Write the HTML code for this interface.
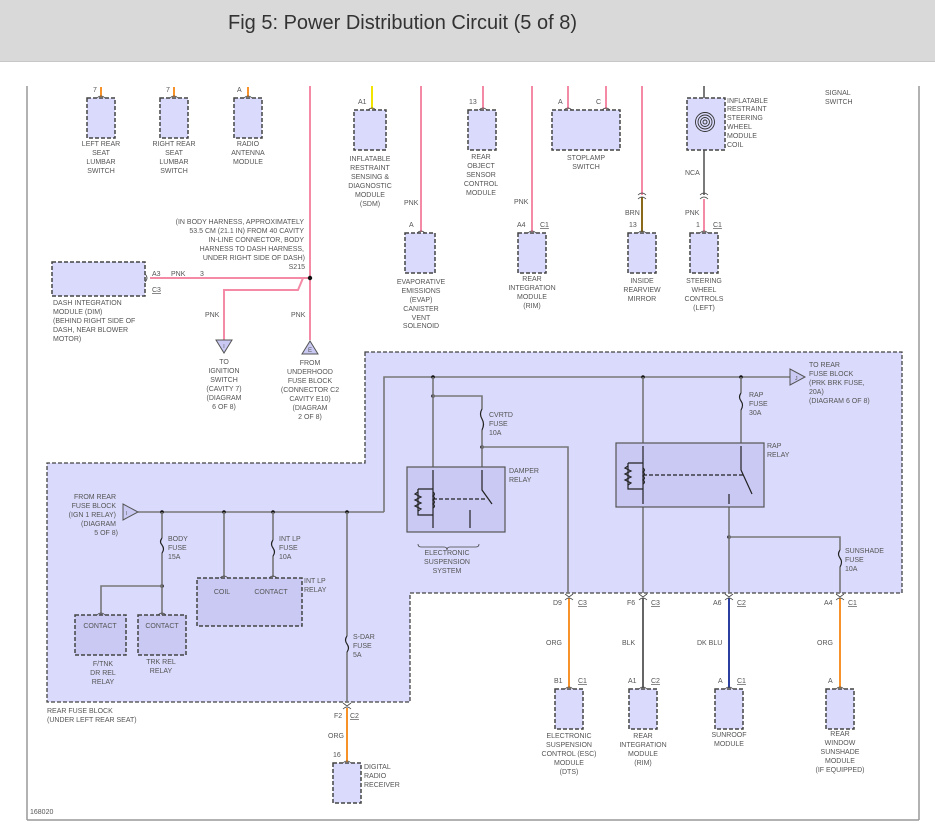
<!DOCTYPE html>
<html><head><meta charset="utf-8"><style>
html,body{margin:0;padding:0;background:#fff;width:935px;height:834px;overflow:hidden}
.hdr{position:absolute;left:0;top:0;width:935px;height:61px;background:#d9d9d9;border-bottom:1px solid #c8c8c8}
.hdr div{position:absolute;left:228px;top:12px;font:20px "Liberation Sans",sans-serif;color:#333}
svg{position:absolute;left:0;top:0}
text{font-family:"Liberation Sans",sans-serif;font-size:7px;fill:#555}
.c{text-anchor:middle}
.r{text-anchor:end}
.box{fill:#dadafc;stroke:#444;stroke-width:1.5;stroke-dasharray:4 2}
.rel{fill:#c9c9f4;stroke:#555;stroke-width:1.2}
.g{stroke:#777;stroke-width:1.6;fill:none}
.p{stroke:#f48aa6;stroke-width:2;fill:none}
.o{stroke:#f7922b;stroke-width:2;fill:none}
.k{stroke:#222;stroke-width:1.2;fill:none}
.cn{stroke:#444;stroke-width:0.8;fill:none}
</style></head><body>
<div class="hdr"><div>Fig 5: Power Distribution Circuit (5 of 8)</div></div>
<svg width="935" height="834" viewBox="0 0 935 834">
<line x1="27" y1="86" x2="27" y2="820" stroke="#999" stroke-width="1.5"/>
<line x1="919" y1="86" x2="919" y2="820" stroke="#999" stroke-width="1.5"/>
<line x1="27" y1="820" x2="919" y2="820" stroke="#999" stroke-width="1.5"/>
<text x="30" y="814">168020</text>

<!-- shaded rear fuse block -->
<path d="M365 352 H902 V593 H410 V702 H47 V463 H365 Z" fill="#dadafc" stroke="#444" stroke-width="1.3" stroke-dasharray="4 2"/>

<!-- top components -->
<g>
<line x1="101" y1="87" x2="101" y2="97" class="o"/><rect x="87" y="98" width="28" height="40" class="box"/><text x="93" y="92">7</text>
<text x="101" y="146" class="c">LEFT REAR</text><text x="101" y="155" class="c">SEAT</text><text x="101" y="164" class="c">LUMBAR</text><text x="101" y="173" class="c">SWITCH</text>
<line x1="174" y1="87" x2="174" y2="97" class="o"/><rect x="160" y="98" width="28" height="40" class="box"/><text x="166" y="92">7</text>
<text x="174" y="146" class="c">RIGHT REAR</text><text x="174" y="155" class="c">SEAT</text><text x="174" y="164" class="c">LUMBAR</text><text x="174" y="173" class="c">SWITCH</text>
<line x1="248" y1="87" x2="248" y2="97" class="o"/><rect x="234" y="98" width="28" height="40" class="box"/><text x="237" y="92">A</text>
<text x="248" y="146" class="c">RADIO</text><text x="248" y="155" class="c">ANTENNA</text><text x="248" y="164" class="c">MODULE</text>

<line x1="372" y1="86" x2="372" y2="109" stroke="#f2e600" stroke-width="2"/><rect x="354" y="110" width="32" height="40" class="box"/><text x="358" y="104">A1</text>
<text x="370" y="161" class="c">INFLATABLE</text><text x="370" y="170" class="c">RESTRAINT</text><text x="370" y="179" class="c">SENSING &amp;</text><text x="370" y="188" class="c">DIAGNOSTIC</text><text x="370" y="197" class="c">MODULE</text><text x="370" y="206" class="c">(SDM)</text>

<line x1="310" y1="86" x2="310" y2="340" class="p"/>
<line x1="421" y1="86" x2="421" y2="232" class="p"/><text x="404" y="205">PNK</text><text x="409" y="227">A</text>
<rect x="405" y="233" width="30" height="40" class="box"/>
<text x="421" y="284" class="c">EVAPORATIVE</text><text x="421" y="293" class="c">EMISSIONS</text><text x="421" y="302" class="c">(EVAP)</text><text x="421" y="311" class="c">CANISTER</text><text x="421" y="320" class="c">VENT</text><text x="421" y="328" class="c">SOLENOID</text>

<line x1="483" y1="86" x2="483" y2="109" class="p"/><rect x="468" y="110" width="28" height="40" class="box"/><text x="469" y="104">13</text>
<text x="481" y="159" class="c">REAR</text><text x="481" y="168" class="c">OBJECT</text><text x="481" y="177" class="c">SENSOR</text><text x="481" y="186" class="c">CONTROL</text><text x="481" y="195" class="c">MODULE</text>

<line x1="532" y1="86" x2="532" y2="232" class="p"/><text x="514" y="204">PNK</text><text x="517" y="227">A4</text><text x="540" y="227" text-decoration="underline">C1</text>
<rect x="518" y="233" width="28" height="40" class="box"/>
<text x="532" y="281" class="c">REAR</text><text x="532" y="290" class="c">INTEGRATION</text><text x="532" y="299" class="c">MODULE</text><text x="532" y="308" class="c">(RIM)</text>

<line x1="568" y1="86" x2="568" y2="109" class="p"/><line x1="606" y1="86" x2="606" y2="109" class="p"/>
<rect x="552" y="110" width="68" height="40" class="box"/><text x="558" y="104">A</text><text x="596" y="104">C</text>
<text x="586" y="160" class="c">STOPLAMP</text><text x="586" y="169" class="c">SWITCH</text>

<line x1="642" y1="86" x2="642" y2="195" class="p"/><line x1="642" y1="197" x2="642" y2="232" stroke="#8a6a1a" stroke-width="2"/>
<path d="M638 195 q4 -4 8 0 M638 199 q4 -4 8 0" class="cn"/>
<text x="625" y="215">BRN</text><text x="629" y="227">13</text>
<rect x="628" y="233" width="28" height="40" class="box"/>
<text x="642" y="283" class="c">INSIDE</text><text x="642" y="292" class="c">REARVIEW</text><text x="642" y="301" class="c">MIRROR</text>

<line x1="704" y1="86" x2="704" y2="195" class="k" stroke-width="2"/>
<rect x="687" y="98" width="38" height="52" class="box"/>
<g fill="none" stroke="#333" stroke-width="0.9"><circle cx="705" cy="122" r="2"/><circle cx="705" cy="122" r="4.5"/><circle cx="705" cy="122" r="7"/><circle cx="705" cy="122" r="9.5"/></g>
<text x="727" y="103">INFLATABLE</text><text x="727" y="111">RESTRAINT</text><text x="727" y="120">STEERING</text><text x="727" y="129">WHEEL</text><text x="727" y="138">MODULE</text><text x="727" y="147">COIL</text>
<text x="685" y="175">NCA</text>
<path d="M700 195 q4 -4 8 0 M700 199 q4 -4 8 0" class="cn"/>
<line x1="704" y1="199" x2="704" y2="232" class="p"/><text x="685" y="215">PNK</text><text x="696" y="227">1</text><text x="713" y="227" text-decoration="underline">C1</text>
<rect x="690" y="233" width="28" height="40" class="box"/>
<text x="704" y="283" class="c">STEERING</text><text x="704" y="292" class="c">WHEEL</text><text x="704" y="301" class="c">CONTROLS</text><text x="704" y="310" class="c">(LEFT)</text>
<text x="825" y="95">SIGNAL</text><text x="825" y="104">SWITCH</text>
</g>

<!-- DIM & splice -->
<rect x="52" y="262" width="93" height="34" class="box"/>
<line x1="150" y1="278" x2="310" y2="278" class="p"/>
<path d="M303 278 L298 290 H224 V340" class="p"/>
<circle cx="310" cy="278" r="2.2" fill="#111"/>
<text x="152" y="276">A3</text><text x="171" y="276">PNK</text><text x="200" y="276">3</text><text x="152" y="292" text-decoration="underline">C3</text>
<text x="304" y="224" class="r">(IN BODY HARNESS, APPROXIMATELY</text><text x="304" y="233" class="r">53.5 CM (21.1 IN) FROM 40 CAVITY</text><text x="304" y="242" class="r">IN-LINE CONNECTOR, BODY</text><text x="304" y="251" class="r">HARNESS TO DASH HARNESS,</text><text x="305" y="260" class="r">UNDER RIGHT SIDE OF DASH)</text><text x="305" y="269" class="r">S215</text>
<text x="53" y="305">DASH INTEGRATION</text><text x="53" y="314">MODULE (DIM)</text><text x="53" y="323">(BEHIND RIGHT SIDE OF</text><text x="53" y="332">DASH, NEAR BLOWER</text><text x="53" y="341">MOTOR)</text>
<text x="205" y="317">PNK</text><text x="291" y="317">PNK</text>
<path d="M216 340 H232 L224 353 Z" fill="#c9c9f4" stroke="#555"/><text x="224" y="348" class="c" style="font-size:5px">I</text>
<path d="M302 354 H318 L310 341 Z" fill="#c9c9f4" stroke="#555"/><text x="310" y="352" class="c" style="font-size:6px">E</text>
<text x="224" y="364" class="c">TO</text><text x="224" y="373" class="c">IGNITION</text><text x="224" y="382" class="c">SWITCH</text><text x="224" y="391" class="c">(CAVITY 7)</text><text x="224" y="400" class="c">(DIAGRAM</text><text x="224" y="409" class="c">6 OF 8)</text>
<text x="310" y="365" class="c">FROM</text><text x="310" y="374" class="c">UNDERHOOD</text><text x="310" y="383" class="c">FUSE BLOCK</text><text x="310" y="392" class="c">(CONNECTOR C2</text><text x="310" y="401" class="c">CAVITY E10)</text><text x="310" y="410" class="c">(DIAGRAM</text><text x="310" y="419" class="c">2 OF 8)</text>

<!-- upper bus -->
<path d="M384 512 V377 H790" class="g"/>
<path d="M790 369 V385 L805 377 Z" fill="#c9c9f4" stroke="#555"/><text x="795" y="380" style="font-size:5px">J</text>
<text x="809" y="367">TO REAR</text><text x="809" y="376">FUSE BLOCK</text><text x="809" y="385">(PRK BRK FUSE,</text><text x="809" y="394">20A)</text><text x="809" y="403">(DIAGRAM 6 OF 8)</text>
<g fill="#111"><circle cx="433" cy="377" r="1.8"/><circle cx="643" cy="377" r="1.8"/><circle cx="741" cy="377" r="1.8"/><circle cx="433" cy="396" r="1.8"/><circle cx="482" cy="447" r="1.8"/><circle cx="729" cy="537" r="1.8"/></g>
<path d="M433 377 V467 M433 396 H482 V409 M482 430 V467 M482 447 H568 V593" class="g"/>
<path d="M482 409 q-3 5 0 10 q3 5 0 11" class="k"/>
<text x="489" y="417">CVRTD</text><text x="489" y="426">FUSE</text><text x="489" y="435">10A</text>
<rect x="407" y="467" width="98" height="65" class="rel"/>
<text x="509" y="473">DAMPER</text><text x="509" y="482">RELAY</text>
<g class="k"><path d="M433 470 V528 M482 470 V490 L492 504 M470 510 V528"/><path d="M418 489 V515 H433 M418 489 H433" /><path d="M418 492 l-3 2 6 3 -6 3 6 3 -6 3 6 3 -3 2"/><path d="M433 492 q3 2 0 4 q3 2 0 4 q3 2 0 4 q3 2 0 4"/><path d="M433 499 H486" stroke-dasharray="4 2"/></g>
<text x="447" y="555" class="c">ELECTRONIC</text><text x="447" y="564" class="c">SUSPENSION</text><text x="447" y="573" class="c">SYSTEM</text>
<path d="M418 544 q0 3 3 3 H444 q3 0 3 3 q0 -3 3 -3 H476 q3 0 3 -3" class="cn"/>

<path d="M643 377 V593 M741 377 V393 M741 410 V443 M729 507 V593 M729 537 H840 V550 M840 567 V593" class="g"/>
<path d="M741 393 q-3 4 0 8 q3 4 0 9" class="k"/>
<path d="M840 550 q-3 4 0 8 q3 4 0 9" class="k"/>
<text x="749" y="397">RAP</text><text x="749" y="406">FUSE</text><text x="749" y="415">30A</text>
<text x="845" y="553">SUNSHADE</text><text x="845" y="562">FUSE</text><text x="845" y="571">10A</text>
<rect x="616" y="443" width="148" height="64" class="rel"/>
<text x="767" y="448">RAP</text><text x="767" y="457">RELAY</text>
<g class="k"><path d="M643 446 V504 M741 446 V470 L752 494 M729 494 V504"/><path d="M628 463 V489 H643 M628 463 H643"/><path d="M628 466 l-3 2 6 3 -6 3 6 3 -6 3 6 3 -3 2"/><path d="M643 468 q3 2 0 4 q3 2 0 4 q3 2 0 4 q3 2 0 4"/><path d="M643 475 H745" stroke-dasharray="4 2"/></g>

<!-- lower-left bus -->
<path d="M138 512 H384" class="g"/>
<path d="M123 504 V520 L138 512 Z" fill="#c9c9f4" stroke="#555"/><text x="126" y="515" style="font-size:5px">I</text>
<text x="116" y="499" class="r">FROM REAR</text><text x="116" y="508" class="r">FUSE BLOCK</text><text x="116" y="517" class="r">(IGN 1 RELAY)</text><text x="116" y="526" class="r">(DIAGRAM</text><text x="118" y="535" class="r">5 OF 8)</text>
<g fill="#111"><circle cx="162" cy="512" r="1.8"/><circle cx="224" cy="512" r="1.8"/><circle cx="273" cy="512" r="1.8"/><circle cx="347" cy="512" r="1.8"/><circle cx="162" cy="586" r="1.8"/></g>
<path d="M162 512 V538 M162 553 V615 M162 586 H101 V615 M224 512 V577 M273 512 V540 M273 556 V577 M347 512 V636 M347 652 V702" class="g"/>
<path d="M162 538 q-3 4 0 7 q3 4 0 8 M273 540 q-3 4 0 8 q3 4 0 8 M347 636 q-3 4 0 8 q3 4 0 8" class="k"/>
<text x="168" y="541">BODY</text><text x="168" y="550">FUSE</text><text x="168" y="559">15A</text>
<text x="279" y="541">INT LP</text><text x="279" y="550">FUSE</text><text x="279" y="559">10A</text>
<text x="353" y="639">S-DAR</text><text x="353" y="648">FUSE</text><text x="353" y="657">5A</text>
<rect x="197" y="578" width="105" height="48" class="box" fill="#c9c9f4" style="fill:#c9c9f4"/>
<text x="222" y="594" class="c">COIL</text><text x="271" y="594" class="c">CONTACT</text>
<text x="304" y="583">INT LP</text><text x="304" y="592">RELAY</text>
<rect x="75" y="615" width="51" height="40" class="box" style="fill:#c9c9f4"/><text x="100" y="628" class="c">CONTACT</text>
<rect x="138" y="615" width="48" height="40" class="box" style="fill:#c9c9f4"/><text x="162" y="628" class="c">CONTACT</text>
<text x="103" y="666" class="c">F/TNK</text><text x="103" y="675" class="c">DR REL</text><text x="103" y="684" class="c">RELAY</text>
<text x="161" y="664" class="c">TRK REL</text><text x="161" y="673" class="c">RELAY</text>
<text x="47" y="713">REAR FUSE BLOCK</text><text x="47" y="722">(UNDER LEFT REAR SEAT)</text>

<line x1="347" y1="708" x2="347" y2="762" class="o"/>
<text x="334" y="718">F2</text><text x="350" y="718" text-decoration="underline">C2</text><text x="328" y="738">ORG</text><text x="333" y="757">16</text>
<rect x="333" y="763" width="28" height="40" class="box"/>
<text x="364" y="769">DIGITAL</text><text x="364" y="778">RADIO</text><text x="364" y="787">RECEIVER</text>

<!-- bottom modules -->
<line x1="569" y1="598" x2="569" y2="688" class="o"/>
<text x="553" y="605">D9</text><text x="578" y="605" text-decoration="underline">C3</text><text x="546" y="645">ORG</text><text x="554" y="683">B1</text><text x="578" y="683" text-decoration="underline">C1</text>
<rect x="555" y="689" width="28" height="40" class="box"/>
<text x="569" y="738" class="c">ELECTRONIC</text><text x="569" y="747" class="c">SUSPENSION</text><text x="569" y="756" class="c">CONTROL (ESC)</text><text x="569" y="765" class="c">MODULE</text><text x="569" y="774" class="c">(DTS)</text>

<line x1="643" y1="598" x2="643" y2="688" stroke="#666" stroke-width="2"/>
<text x="627" y="605">F6</text><text x="651" y="605" text-decoration="underline">C3</text><text x="622" y="645">BLK</text><text x="628" y="683">A1</text><text x="651" y="683" text-decoration="underline">C2</text>
<rect x="629" y="689" width="28" height="40" class="box"/>
<text x="643" y="738" class="c">REAR</text><text x="643" y="747" class="c">INTEGRATION</text><text x="643" y="756" class="c">MODULE</text><text x="643" y="765" class="c">(RIM)</text>

<line x1="729" y1="598" x2="729" y2="688" stroke="#2a3fa0" stroke-width="2"/>
<text x="713" y="605">A6</text><text x="737" y="605" text-decoration="underline">C2</text><text x="697" y="645">DK BLU</text><text x="718" y="683">A</text><text x="737" y="683" text-decoration="underline">C1</text>
<rect x="715" y="689" width="28" height="40" class="box"/>
<text x="729" y="737" class="c">SUNROOF</text><text x="729" y="746" class="c">MODULE</text>

<line x1="840" y1="598" x2="840" y2="688" class="o"/>
<text x="824" y="605">A4</text><text x="848" y="605" text-decoration="underline">C1</text><text x="817" y="645">ORG</text><text x="828" y="683">A</text>
<rect x="826" y="689" width="28" height="40" class="box"/>
<text x="840" y="736" class="c">REAR</text><text x="840" y="745" class="c">WINDOW</text><text x="840" y="754" class="c">SUNSHADE</text><text x="840" y="763" class="c">MODULE</text><text x="840" y="772" class="c">(IF EQUIPPED)</text>

<!-- connector arcs -->
<g class="cn">
<path d="M97 98 q4 -4 8 0 M170 98 q4 -4 8 0 M244 98 q4 -4 8 0 M368 110 q4 -4 8 0 M417 233 q4 -4 8 0 M479 110 q4 -4 8 0 M528 233 q4 -4 8 0 M564 110 q4 -4 8 0 M602 110 q4 -4 8 0 M638 233 q4 -4 8 0 M700 233 q4 -4 8 0 M145 274 q4 4 0 8"/>
<path d="M565 594 l4 3 4 -3 M565 600 q4 -4 8 0 M639 594 l4 3 4 -3 M639 600 q4 -4 8 0 M725 594 l4 3 4 -3 M725 600 q4 -4 8 0 M836 594 l4 3 4 -3 M836 600 q4 -4 8 0 M343 703 l4 3 4 -3 M343 709 q4 -4 8 0"/>
<path d="M565 689 q4 -4 8 0 M639 689 q4 -4 8 0 M725 689 q4 -4 8 0 M836 689 q4 -4 8 0 M343 763 q4 -4 8 0 M97 615 q4 -4 8 0 M158 615 q4 -4 8 0 M220 578 q4 -4 8 0 M269 578 q4 -4 8 0"/>
</g>
</svg>
</body></html>
